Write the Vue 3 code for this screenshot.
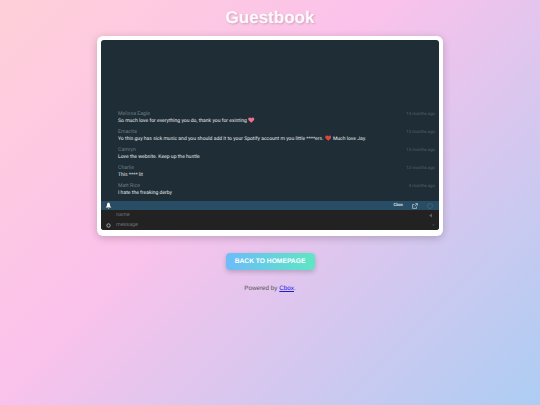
<script setup>
const messages = [
  { name: 'Melissa Eagle', text: 'So much love for everything you do, thank you for existing', heart: 'pink', time: '14 months ago' },
  { name: 'Emacita', text: 'Yo this guy has sick music and you should add it to your Spotify account m you little ****ers.', heart: 'red', after: 'Much love Jay.', time: '13 months ago' },
  { name: 'Camryn', text: 'Love the website. Keep up the hustle', time: '13 months ago' },
  { name: 'Charlie', text: 'This **** lit', time: '12 months ago' },
  { name: 'Matt Rice', text: 'I hate the freaking derby', time: '4 months ago' }
]
const heartPath = 'M5 9 1 5C-.5 3.2.6.8 2.7.8 3.8.8 4.6 1.5 5 2.2 5.4 1.5 6.2.8 7.3.8 9.4.8 10.5 3.2 9 5Z'
</script>

<template>
  <main class="page">
    <h1 class="title">Guestbook</h1>
    <section class="frame">
      <div class="chat">
        <ul class="log">
          <li v-for="m in messages" :key="m.name" class="msg">
            <div class="meta">
              <span class="name">{{ m.name }}</span>
              <span class="time">{{ m.time }}</span>
            </div>
            <div class="text">
              <span>{{ m.text }}</span>
              <svg v-if="m.heart" class="heart" viewBox="0 0 10 10" :fill="m.heart === 'pink' ? '#f0708f' : '#e0453c'">
                <path :d="heartPath" />
              </svg>
              <span v-if="m.after">{{ m.after }}</span>
            </div>
          </li>
        </ul>
        <div class="bar">
          <svg class="bell" viewBox="0 0 10 10" fill="#fff">
            <path d="M5 1C3.6 1 3 2 3 3.4 3 5.4 2 6.4 1.2 7.4V8H8.8V7.4C8 6.4 7 5.4 7 3.4 7 2 6.4 1 5 1ZM4 8.5H6L5 9.5Z" />
          </svg>
          <span class="spacer"></span>
          <span class="brand">Cbox</span>
          <svg class="popout" viewBox="0 0 10 10" fill="none" stroke="#dfe6ea" stroke-width="1">
            <path d="M7.5 6V9H1V2.5H4M5.5 1H9V4.5M9 1 4.5 5.5" />
          </svg>
          <span class="status"></span>
        </div>
        <div class="inputs">
          <div class="row">
            <span class="gutter"></span>
            <span class="field">name</span>
            <svg class="side" viewBox="0 0 10 10" fill="#5d6266">
              <path d="M1 3.5H3L6 1V9L3 6.5H1Z" />
            </svg>
          </div>
          <div class="row">
            <span class="gutter">
              <svg class="gear" viewBox="0 0 10 10" fill="none" stroke="#a4a7a9" stroke-width="2">
                <circle cx="5" cy="5" r="3.4" />
              </svg>
            </span>
            <span class="field">message</span>
            <span class="caret">›</span>
          </div>
        </div>
      </div>
    </section>
    <a class="back" href="#">BACK TO HOMEPAGE</a>
    <p class="powered">Powered by <a href="#">Cbox</a>.</p>
  </main>
</template>

<style>
html, body { margin: 0; }
</style>

<style scoped>
.page {
  box-sizing: border-box;
  width: 540px;
  height: 405px;
  overflow: hidden;
  display: flex;
  flex-direction: column;
  align-items: center;
  padding-top: 8px;
  font-family: "Liberation Sans", Arial, sans-serif;
  text-rendering: geometricPrecision;
  background: linear-gradient(135deg, #ffd0d8 0%, #fbc2eb 40%, #adcdf3 100%);
}
.title {
  margin: 0 0 8px;
  height: 20px;
  line-height: 20px;
  font-size: 17px;
  font-weight: 700;
  color: #fff;
  opacity: .9;
  text-shadow: 1px 1px 2px rgba(0, 0, 0, .2);
}
.frame {
  box-sizing: border-box;
  width: 346px;
  height: 200px;
  padding: 4px 4px 6px;
  background: #fff;
  border-radius: 6px;
  box-shadow: 0 2px 8px rgba(0, 0, 0, .2);
}
.chat {
  height: 100%;
  display: flex;
  flex-direction: column;
  overflow: hidden;
  border-radius: 3px;
  background: #1f2d36;
  font-family: Roboto, "Liberation Sans", sans-serif;
}
.log {
  flex: 1;
  margin: 0;
  padding: 0 4px 5px 17px;
  list-style: none;
  display: flex;
  flex-direction: column;
  justify-content: flex-end;
  gap: 4px;
}
.msg { height: 14px; }
.meta {
  display: flex;
  justify-content: space-between;
  align-items: flex-start;
  height: 7px;
  line-height: 9px;
}
.name { font-size: 5.2px; color: #6b7c87; }
.time { font-size: 4.3px; color: #55656f; }
.text {
  display: flex;
  align-items: center;
  gap: 1.5px;
  height: 7px;
  line-height: 8px;
  font-size: 5.05px;
  color: #e3e8ea;
  white-space: pre;
}
.heart {
  flex: none;
  width: 6.5px;
  height: 6.5px;
}
.bar {
  flex: none;
  height: 9px;
  display: flex;
  align-items: center;
  padding: 0 6px 0 4px;
  background: #2a4d66;
}
.bell { width: 7px; height: 7px; }
.spacer { flex: 1; }
.brand {
  margin-right: 9px;
  font-size: 4.2px;
  font-weight: 700;
  color: #cfdbe2;
}
.popout { width: 6px; height: 6px; margin-right: 9px; }
.status {
  width: 4px;
  height: 4px;
  border: 1px solid #3e6176;
  border-radius: 50%;
}
.inputs { flex: none; height: 20px; background: #222; }
.row {
  height: 10px;
  display: flex;
  align-items: center;
  padding-right: 5px;
}
.gutter {
  width: 15px;
  display: flex;
  justify-content: center;
}
.gear { width: 5px; height: 5px; }
.field {
  flex: 1;
  font-size: 5.4px;
  color: #6d7073;
}
.side { width: 5px; height: 5px; }
.caret { font-size: 5px; color: #888; }
.back {
  margin-top: 17px;
  width: 89px;
  height: 17px;
  line-height: 17px;
  text-align: center;
  font-size: 6.7px;
  font-weight: 700;
  color: #fff;
  text-decoration: none;
  border-radius: 4px;
  background: linear-gradient(90deg, #6cbcf8, #5fe6c4);
  box-shadow: 0 2px 5px rgba(0, 0, 0, .2);
}
.powered {
  margin: 15px 0 0;
  font-size: 6.3px;
  color: #555;
}
.powered a { color: #1a1ae0; }
</style>
